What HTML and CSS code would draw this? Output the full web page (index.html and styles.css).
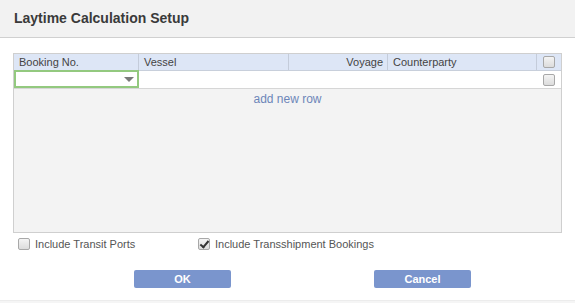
FILE: index.html
```html
<!DOCTYPE html>
<html lang="en">
<head>
    <meta charset="UTF-8">
    <title>Laytime Calculation Setup</title>
    <link rel="stylesheet" href="styles.css">
</head>
<body>
    <div class="dialog">
        <div class="dialog-header">Laytime Calculation Setup</div>

        <div class="dialog-body">
            <!-- Bookings grid -->
            <div class="grid">
                <div class="grid-row grid-head">
                    <div class="cell col-booking">Booking No.</div>
                    <div class="cell col-vessel">Vessel</div>
                    <div class="cell col-voyage">Voyage</div>
                    <div class="cell col-party">Counterparty</div>
                    <div class="cell col-check"><span class="box"></span></div>
                </div>
                <div class="grid-row grid-data">
                    <div class="cell col-booking">
                        <div class="combo"><span class="caret"></span></div>
                    </div>
                    <div class="cell col-vessel"></div>
                    <div class="cell col-voyage"></div>
                    <div class="cell col-party"></div>
                    <div class="cell col-check"><span class="box"></span></div>
                </div>
                <div class="add-row">add new row</div>
            </div>

            <div class="options">
                <label class="option opt-transit"><span class="box"></span>Include Transit Ports</label>
                <label class="option"><span class="box checked"></span>Include Transshipment Bookings</label>
            </div>

            <div class="actions">
                <button class="btn btn-ok">OK</button>
                <button class="btn btn-cancel">Cancel</button>
            </div>
        </div>
        <div class="dialog-footer"></div>
    </div>
</body>
</html>
```

FILE: styles.css
```css
body {
    margin: 0;
    font-family: "Liberation Sans", Arial, sans-serif;
    font-size: 12px;
    color: #333;
    background: #fff;
}

.dialog {
    width: 575px;
    height: 303px;
    display: flex;
    flex-direction: column;
}

.dialog-header {
    height: 37px;
    background: #f2f2f2;
    border-bottom: 1px solid #d0d0d0;
    padding-left: 14px;
    font-size: 14px;
    font-weight: bold;
    line-height: 37px;
    color: #3a3a3a;
}

.dialog-body {
    flex: 1;
    padding: 15px 13px 0 13px;
}

.grid {
    width: 547px;
    height: 178px;
    border: 1px solid #cfcfcf;
    background: #f3f3f3;
}

.grid-row {
    display: flex;
}

.grid-head {
    height: 16px;
    background: #dde6f6;
    border-bottom: 1px solid #c8cfdb;
    font-size: 11px;
    color: #444;
}

.grid-data {
    height: 17px;
    background: #fff;
    border-bottom: 1px solid #d6d6d6;
}

.cell {
    box-sizing: border-box;
    padding: 0 5px;
    line-height: 17px;
    white-space: nowrap;
}

.grid-head .cell {
    border-right: 1px solid #c4ccda;
}

.grid-head .col-check {
    border-right: none;
}

.col-booking { width: 125px; }
.col-vessel { width: 150px; }
.col-voyage { width: 99px; text-align: right; padding-right: 4px; }
.col-party { width: 149px; }
.col-check { width: 24px; display: flex; align-items: center; justify-content: center; padding: 0; }

.grid-data .col-booking {
    padding: 0;
}

.combo {
    box-sizing: border-box;
    height: 18px;
    margin-top: -1px;
    width: 125px;
    border: 2px solid #93c97f;
    position: relative;
}

.caret {
    position: absolute;
    right: 3px;
    top: 5px;
    border-left: 5px solid transparent;
    border-right: 5px solid transparent;
    border-top: 5px solid #7a7a7a;
}

.box {
    box-sizing: border-box;
    display: inline-block;
    width: 12px;
    height: 12px;
    border: 1px solid #a8a8a8;
    border-radius: 2px;
    background: linear-gradient(#f4f4f4, #dcdcdc);
    position: relative;
}

.box.checked::after {
    content: "";
    position: absolute;
    left: 3px;
    top: 0px;
    width: 3px;
    height: 7px;
    border-right: 2px solid #333;
    border-bottom: 2px solid #333;
    transform: rotate(40deg);
}

.add-row {
    text-align: center;
    color: #6d86b9;
    line-height: 20px;
    height: 20px;
}

.options {
    display: flex;
    padding: 4px 0 0 5px;
    color: #555;
    font-size: 11px;
}

.option {
    display: flex;
    align-items: center;
    gap: 5px;
    line-height: 14px;
}

.opt-transit {
    width: 180px;
}

.actions {
    display: flex;
    padding: 19px 0 0 121px;
    gap: 143px;
}

.btn {
    width: 97px;
    height: 18px;
    border: none;
    border-radius: 2px;
    background: #7a95cd;
    color: #fff;
    font-family: "Liberation Sans", Arial, sans-serif;
    font-size: 11px;
    font-weight: bold;
    padding: 0;
}

.dialog-footer {
    height: 2px;
    border-top: 1px solid #ececec;
    background: #f5f5f5;
}
```
